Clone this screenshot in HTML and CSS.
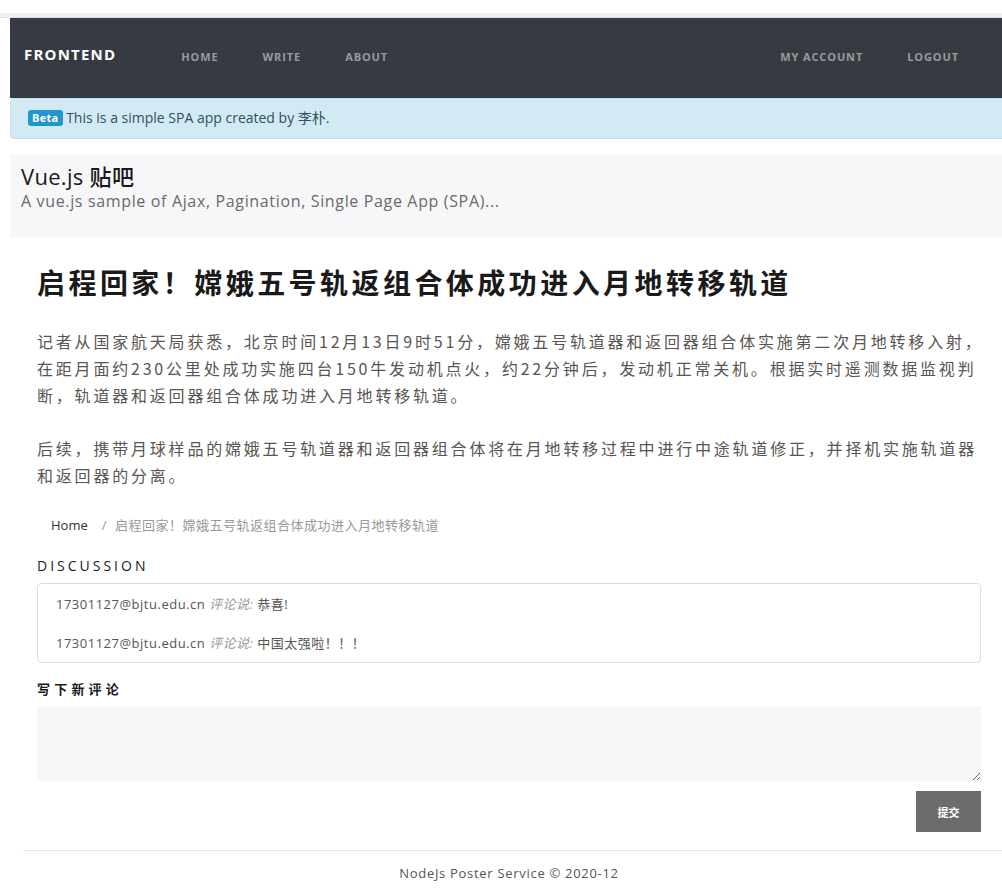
FILE: index.html
```html
<!DOCTYPE html>
<html lang="zh">
<head>
<meta charset="utf-8">
<title>Vue.js 贴吧</title>
<link rel="stylesheet" href="styles.css">
</head>
<body>
<div class="topband"></div>
<div class="page">
  <nav class="navbar">
    <a class="brand">FRONTEND</a>
    <ul class="nav-left">
      <li>HOME</li>
      <li>WRITE</li>
      <li>ABOUT</li>
    </ul>
    <ul class="nav-right">
      <li>MY ACCOUNT</li>
      <li>LOGOUT</li>
    </ul>
  </nav>
  <div class="alert"><span class="badge">Beta</span> This is a simple SPA app created by 李朴.</div>
  <div class="jumbotron">
    <h1 class="jt-title">Vue.js 贴吧</h1>
    <p class="jt-sub">A vue.js sample of Ajax, Pagination, Single Page App (SPA)...</p>
  </div>
  <main class="content">
    <h2 class="post-title">启程回家！嫦娥五号轨返组合体成功进入月地转移轨道</h2>
    <div class="post-body">
      <p>记者从国家航天局获悉，北京时间12月13日9时51分，嫦娥五号轨道器和返回器组合体实施第二次月地转移入射，在距月面约230公里处成功实施四台150牛发动机点火，约22分钟后，发动机正常关机。根据实时遥测数据监视判断，轨道器和返回器组合体成功进入月地转移轨道。</p>
      <p>后续，携带月球样品的嫦娥五号轨道器和返回器组合体将在月地转移过程中进行中途轨道修正，并择机实施轨道器和返回器的分离。</p>
    </div>
    <ol class="breadcrumb">
      <li class="crumb-home">Home</li>
      <li class="crumb-active">启程回家！嫦娥五号轨返组合体成功进入月地转移轨道</li>
    </ol>
    <h3 class="section-label">DISCUSSION</h3>
    <div class="comments">
      <div class="comment">17301127@bjtu.edu.cn <em>评论说:</em> 恭喜!</div>
      <div class="comment">17301127@bjtu.edu.cn <em>评论说:</em> 中国太强啦！！！</div>
    </div>
    <h4 class="new-label">写下新评论</h4>
    <textarea class="new-comment"></textarea>
    <div class="actions"><button class="submit">提交</button></div>
  </main>
  <footer class="footer">
    <hr class="footer-rule">
    <p class="footer-text">NodeJs Poster Service © 2020-12</p>
  </footer>
</div>
</body>
</html>
```
FILE: styles.css
```css
html, body {
  margin: 0;
  padding: 0;
  overflow: hidden;
  background: #fff;
}
body {
  font-family: "Open Sans", "Noto Sans CJK SC", sans-serif;
  color: #555;
}
.topband {
  margin-top: 13px;
  height: 4px;
  background: #efefef;
  border-bottom: 1px solid #e2e2e2;
}
.page {
  margin-left: 10px;
  width: 998px;
}
.navbar {
  display: flex;
  align-items: center;
  height: 80px;
  background: #363a42;
  padding: 0 14px 4px;
  box-sizing: border-box;
}
.brand {
  color: #fff;
  font-weight: 700;
  font-size: 15px;
  letter-spacing: 1.2px;
  margin-top: -4px;
}
.navbar ul {
  list-style: none;
  display: flex;
  margin: 0;
  padding: 0;
}
.navbar li {
  color: #9a9a9a;
  font-size: 11px;
  font-weight: 700;
  letter-spacing: 0.9px;
  padding: 0 22px;
}
.nav-left { margin-left: 43px !important; }
.nav-right { margin-left: auto !important; margin-right: 13px !important; }
.alert {
  height: 41px;
  box-sizing: border-box;
  background: #d3eaf4;
  border: 1px solid #bfe1ef;
  border-radius: 4px 0 0 4px;
  padding: 9px 17px;
  font-size: 14px;
  line-height: 20px;
  color: #30515d;
}
.badge {
  display: inline-block;
  vertical-align: 1px;
  background: #2196cf;
  color: #fff;
  font-weight: 700;
  font-size: 11px;
  line-height: 14px;
  padding: 1px 4px 1px;
  border-radius: 3px;
  letter-spacing: 0.3px;
}
.jumbotron {
  margin-top: 15px;
  height: 84px;
  box-sizing: border-box;
  background: #f7f7f9;
  border-radius: 4px 0 0 4px;
  padding: 8px 11px 0;
}
.jt-title {
  margin: 0;
  font-size: 22px;
  line-height: 28px;
  font-weight: 500;
  letter-spacing: 0.3px;
  color: #1a1a1a;
}
.jt-sub {
  margin: 0;
  font-size: 16px;
  line-height: 22px;
  color: #6a6a6a;
  letter-spacing: 0.65px;
}
.content {
  padding: 0 27px;
}
.post-title {
  margin: 27px 0 0;
  font-family: "Noto Sans CJK SC", sans-serif;
  font-size: 28px;
  line-height: 34px;
  font-weight: 700;
  letter-spacing: 3.45px;
  color: #1a1a1a;
}
.post-body {
  margin: 29px -8px 0 0;
}
.post-body p {
  margin: 0 0 26px;
  font-family: "Noto Sans CJK SC", sans-serif;
  font-size: 16px;
  line-height: 27px;
  letter-spacing: 2.8px;
  color: #5a5550;
}
.breadcrumb {
  list-style: none;
  display: flex;
  margin: 0;
  padding: 0 14px;
  font-size: 13px;
  line-height: 20px;
}
.crumb-home { color: #333; }
.crumb-active { color: #999; letter-spacing: 0.5px; }
.crumb-active::before {
  content: "/";
  padding: 0 8px 0 14px;
  color: #999;
}
.section-label {
  margin: 22px 0 0;
  font-size: 14px;
  line-height: 18px;
  font-weight: 500;
  letter-spacing: 3px;
  color: #1a1a1a;
}
.comments {
  margin-top: 8px;
  border: 1px solid #ddd;
  border-radius: 4px;
  padding: 10px 18px 9px;
}
.comment {
  font-size: 13px;
  line-height: 20px;
  color: #555;
  letter-spacing: 0.5px;
}
.comment + .comment { margin-top: 19px; }
.comment em { color: #999; }
.new-label {
  margin: 17px 0 0;
  font-family: "Noto Sans CJK SC", sans-serif;
  font-size: 13px;
  line-height: 18px;
  font-weight: 700;
  letter-spacing: 4.2px;
  color: #1a1a1a;
}
.new-comment {
  display: block;
  margin-top: 8px;
  width: 100%;
  height: 75px;
  box-sizing: border-box;
  border: none;
  background: #f7f7f9;
  resize: both;
}
.actions {
  display: flex;
  justify-content: flex-end;
  margin-top: 10px;
}
.submit {
  width: 65px;
  height: 41px;
  border: none;
  background: #6c6c6c;
  color: #fff;
  font-family: "Noto Sans CJK SC", sans-serif;
  font-size: 11px;
  font-weight: 700;
}
.footer-rule {
  margin: 18px 0 0 13px;
  border: none;
  border-top: 1px solid #e5e5e5;
}
.footer-text {
  margin: 13px 0 0;
  text-align: center;
  font-size: 13px;
  line-height: 18px;
  color: #555;
  letter-spacing: 0.7px;
}
```
